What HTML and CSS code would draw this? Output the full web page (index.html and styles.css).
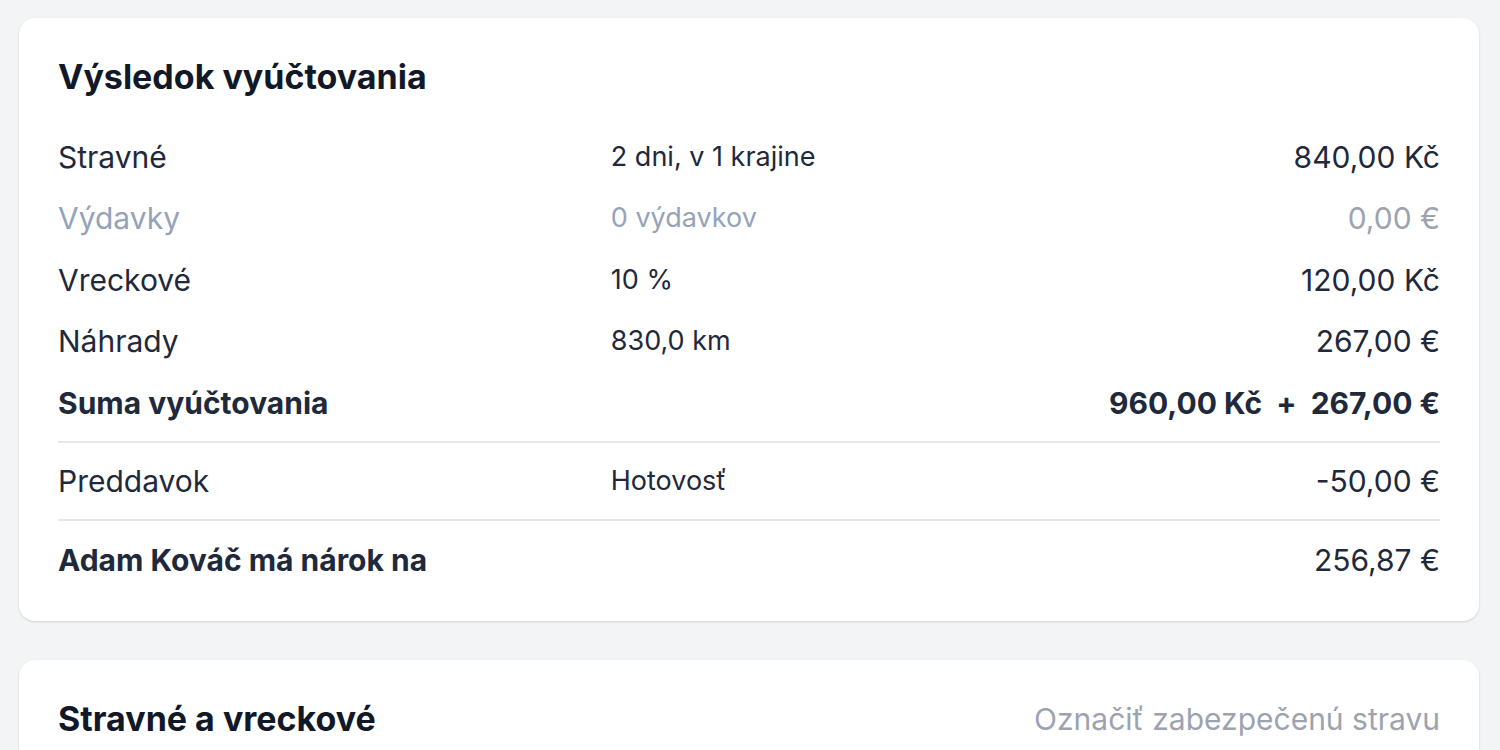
FILE: index.html
```html
<!DOCTYPE html>
<html lang="sk">
<head>
<meta charset="utf-8">
<title>Výsledok vyúčtovania</title>
<link rel="stylesheet" href="styles.css">
</head>
<body>
<main class="page">
  <section class="card">
    <h2 class="card-title">Výsledok vyúčtovania</h2>
    <div class="rows">
      <div class="row">
        <span class="label">Stravné</span>
        <span class="detail">2 dni, v 1 krajine</span>
        <span class="amount">840,00 Kč</span>
      </div>
      <div class="row muted">
        <span class="label">Výdavky</span>
        <span class="detail">0 výdavkov</span>
        <span class="amount">0,00 €</span>
      </div>
      <div class="row">
        <span class="label">Vreckové</span>
        <span class="detail">10 %</span>
        <span class="amount">120,00 Kč</span>
      </div>
      <div class="row">
        <span class="label">Náhrady</span>
        <span class="detail">830,0 km</span>
        <span class="amount">267,00 €</span>
      </div>
      <div class="row strong">
        <span class="label">Suma vyúčtovania</span>
        <span class="detail"></span>
        <span class="amount">960,00 Kč <span class="plus">+</span> 267,00 €</span>
      </div>
    </div>
    <div class="rows divided">
      <div class="row">
        <span class="label">Preddavok</span>
        <span class="detail">Hotovosť</span>
        <span class="amount">-50,00 €</span>
      </div>
    </div>
    <div class="rows divided">
      <div class="row">
        <span class="label bold">Adam Kováč má nárok na</span>
        <span class="detail"></span>
        <span class="amount">256,87 €</span>
      </div>
    </div>
  </section>

  <section class="card">
    <div class="card-head">
      <h2 class="card-title">Stravné a vreckové</h2>
      <span class="link-muted">Označiť zabezpečenú stravu</span>
    </div>
  </section>
</main>
</body>
</html>
```

FILE: styles.css
```css
* { box-sizing: border-box; }

html, body {
  margin: 0;
  padding: 0;
  background: #f3f4f6;
}

body {
  font-family: Inter, "Noto Sans", "Liberation Sans", sans-serif;
  color: #1e293b;
  overflow: hidden;
}

.page {
  padding: 18px 21px 0 19px;
  display: flex;
  flex-direction: column;
  gap: 39px;
}

.card {
  background: #ffffff;
  border-radius: 16px;
  box-shadow: 0 1px 3px rgba(15, 23, 42, 0.10), 0 1px 2px rgba(15, 23, 42, 0.06);
  padding: 40px 39px 30px 39px;
}

.card-title {
  margin: 0;
  font-size: 34px;
  line-height: 38px;
  font-weight: 700;
  color: #111827;
}

.card-head {
  display: flex;
  align-items: center;
  justify-content: space-between;
}

.link-muted {
  font-size: 30px;
  line-height: 38px;
  color: #9ca3af;
}

.rows {
  display: flex;
  flex-direction: column;
}

.card-title + .rows {
  margin-top: 30px;
}

.rows.divided {
  margin-top: 7px;
  padding-top: 8px;
  border-top: 2px solid #e5e7eb;
}

.row {
  display: grid;
  grid-template-columns: 40% 1fr auto;
  align-items: center;
  height: 61.5px;
  font-size: 30px;
  line-height: 38px;
  color: #1e293b;
}

.detail {
  font-size: 27px;
}

.amount {
  text-align: right;
  white-space: nowrap;
}

.row.muted .label,
.row.muted .detail {
  color: #94a3b8;
}

.row.muted .amount {
  color: #9ca3af;
}

.row.strong .label,
.row.strong .amount,
.label.bold {
  font-weight: 700;
}

.plus {
  padding: 0 7px;
}
```
